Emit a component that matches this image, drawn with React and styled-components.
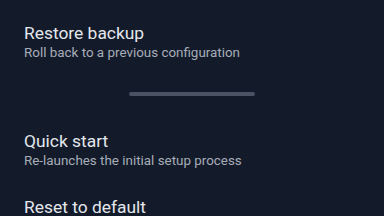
import React from 'react';
import styled, { createGlobalStyle } from 'styled-components';

const GlobalStyle = createGlobalStyle`
  html, body {
    margin: 0;
    padding: 0;
    background: #131b2b;
  }
  body {
    font-family: Roboto, 'Noto Sans', sans-serif;
    -webkit-font-smoothing: antialiased;
  }
`;

const Sheet = styled.div`
  display: flex;
  flex-direction: column;
  width: 384px;
  height: 216px;
  overflow: hidden;
  padding-top: 10px;
  box-sizing: border-box;
  background: #131b2b;
`;

const Item = styled.div`
  display: flex;
  flex-direction: column;
  padding: 13px 24px;
  cursor: pointer;
`;

const Title = styled.div`
  font-size: 17.4px;
  line-height: 20px;
  color: #e4e7ec;
`;

const Subtitle = styled.div`
  font-size: 13.4px;
  line-height: 20px;
  color: #a7adb7;
`;

const HandleRow = styled.div`
  display: flex;
  justify-content: center;
  padding: 16px 0 22px;
`;

const Handle = styled.div`
  width: 126px;
  height: 4px;
  border-radius: 2px;
  background: #4a5363;
`;

const items = [
  { title: 'Quick start', sub: 'Re-launches the initial setup process' },
  { title: 'Reset to default', sub: 'Restore all settings to factory values' },
];

const App = () => (
  <>
    <GlobalStyle />
    <Sheet>
      <Item>
        <Title>Restore backup</Title>
        <Subtitle>Roll back to a previous configuration</Subtitle>
      </Item>
      <HandleRow>
        <Handle />
      </HandleRow>
      {items.map((it) => (
        <Item key={it.title}>
          <Title>{it.title}</Title>
          <Subtitle>{it.sub}</Subtitle>
        </Item>
      ))}
    </Sheet>
  </>
);

export default App;
